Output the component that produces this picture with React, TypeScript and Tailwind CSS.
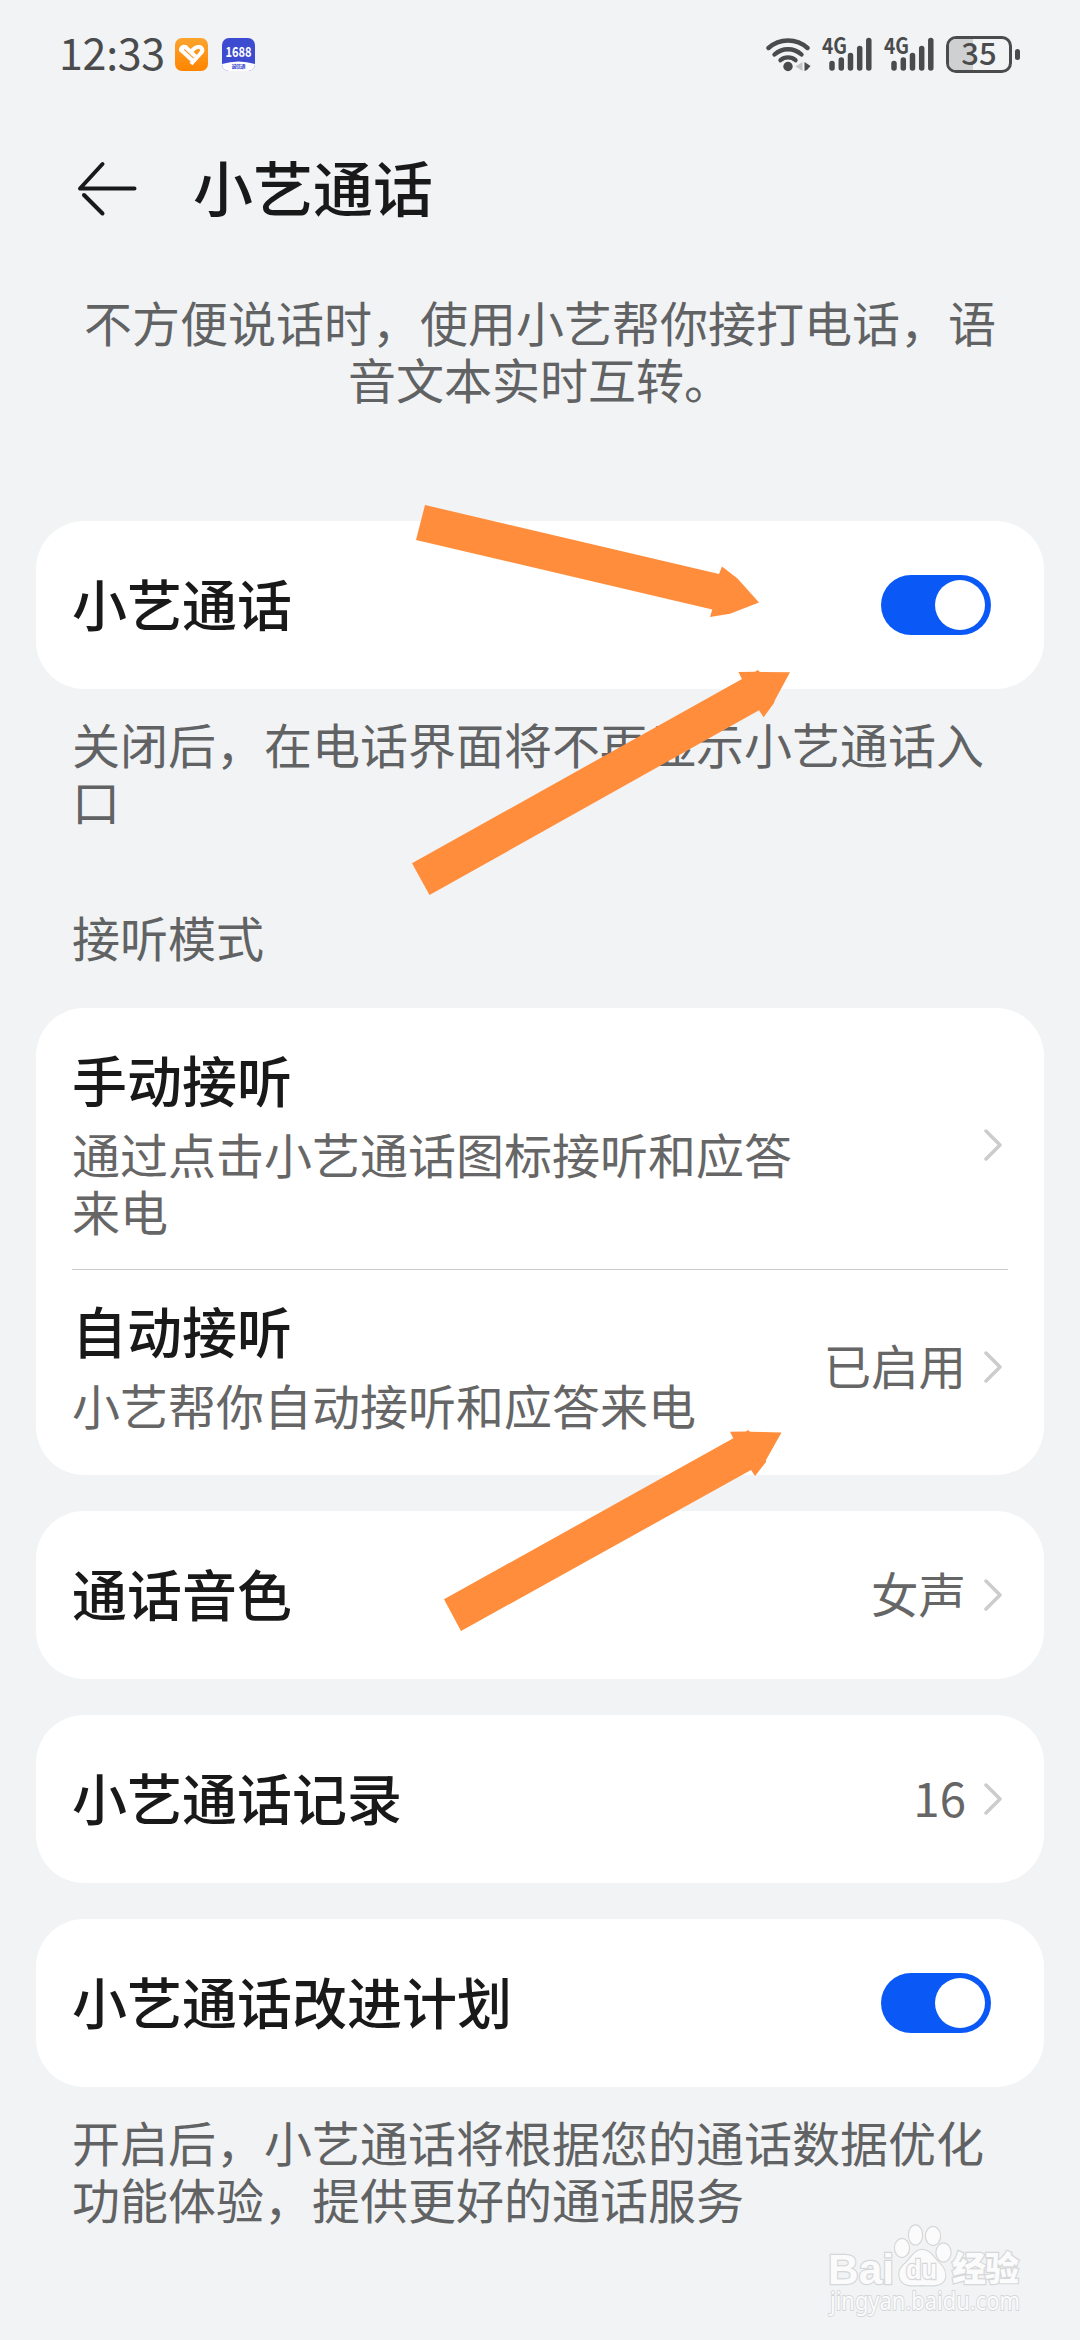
import { ReactNode, useState } from 'react';

const ARROWS = [
  '425,505 719,574 722,566.5 737.5,578.5 759,602.5 730,613.7 710,617 712.3,609.5 416,540',
  '412,863.3 742,679 738.4,672 755,671.7 757.7,670 760,672 790,672.3 775,700 774,703 763.6,717.3 759,710.3 429.5,895',
  '444,1599.3 733.3,1438.3 730,1431.7 746,1431.5 748.2,1430 750,1431.7 781.5,1432.5 766,1460 766,1462 755,1476 751,1470 461,1631',
];

function Signal() {
  return (
    <svg width="50" height="36" viewBox="0 0 50 36" className="shrink-0 overflow-visible">
      <text x="0" y="18" fontSize="22" fontWeight="600" fill="#4a4b4c" textLength="25" lengthAdjust="spacingAndGlyphs">4G</text>
      <path d="M10 27.500v4.500M19.300 24v8M28.500 19.500v12.500M37.700 12.500v19.500M46.800 4.500v27.500" stroke="#4a4b4c" strokeWidth="5.500" strokeLinecap="round" />
    </svg>
  );
}

function Wifi() {
  return (
    <svg width="46" height="36" viewBox="0 0 46 36" className="shrink-0">
      <g fill="none" stroke="#4a4b4c" strokeWidth="4.400" strokeLinecap="round">
        <path d="M2.500 12A29 29 0 0 1 41.500 12" />
        <path d="M8.500 18.500A20 20 0 0 1 35.500 18.500" />
        <path d="M14.500 24.200A11.500 11.500 0 0 1 29.500 24.200" />
      </g>
      <circle cx="22" cy="30.500" r="4.700" fill="#4a4b4c" />
      <path d="M36.500 26v9l-7-4.500z" fill="#c4c5c6" />
      <path d="M38.500 26l6 4-3.500 4-2.500 1z" fill="#4a4b4c" />
    </svg>
  );
}

function StatusBar() {
  return (
    <div className="flex h-[108px] items-center pr-[60px] pl-[59px] text-[#4a4b4c]">
      <span className="w-[116px] pb-[7px] text-[43px] leading-[50px] tracking-[-0.3px]">12:33</span>
      <svg width="33" height="33" viewBox="0 0 33 33">
        <defs>
          <linearGradient id="orange" x1="0" y1="0" x2="0" y2="1">
            <stop offset="0" stopColor="#fba42e" />
            <stop offset="1" stopColor="#ff8500" />
          </linearGradient>
        </defs>
        <rect width="33" height="33" rx="7" fill="url(#orange)" />
        <g fill="none" stroke="#fff" strokeWidth="4" strokeLinejoin="round">
          <path d="M14.500 14.500L20 10C25.500 6.500 29.500 11.500 25.500 15.500L16 26" />
          <path d="M10 8.500L20.500 18.500" />
          <path d="M6 12L17.500 22.500" />
        </g>
        <path d="M4 13C3.500 8 8 5.500 12 7.500L7 14.500z" fill="#fff" />
      </svg>
      <svg width="33" height="33" viewBox="0 0 33 33" className="ml-[14px] overflow-visible">
        <clipPath id="shop">
          <rect width="33" height="33" rx="7" />
        </clipPath>
        <g clipPath="url(#shop)">
          <rect width="33" height="33" fill="#3d4bd0" />
          <path d="M0 26Q16.500 21 33 26V33H0z" fill="#fff" />
        </g>
        <text x="3.500" y="18.500" fontSize="14" fontWeight="700" fill="#fff" textLength="26" lengthAdjust="spacingAndGlyphs">1688</text>
        <text x="9.500" y="30" fontSize="5" fontWeight="700" fill="#3d4bd0" textLength="14">诚信通</text>
      </svg>
      <div className="ml-auto flex items-center">
        <Wifi />
        <div className="ml-[10px] flex gap-3">
          <Signal />
          <Signal />
        </div>
        <div className="relative ml-[12px] flex h-[37px] w-[66px] items-center justify-center rounded-[10px] border-3 border-[#4a4b4c]">
          <div className="absolute inset-y-0 left-0 w-6 rounded-l-[7px] bg-[#cfd0d1]" />
          <span className="relative pb-[4px] text-[31px] leading-[32px] font-medium">35</span>
        </div>
        <div className="ml-[3px] h-[11px] w-[5px] rounded-full bg-[#4a4b4c]" />
      </div>
    </div>
  );
}

function Chevron() {
  return (
    <svg width="20" height="36" viewBox="0 0 20 36" className="ml-[18px] shrink-0">
      <path d="M2 4L16 18L2 32" fill="none" stroke="#ccc" strokeWidth="3.500" strokeLinecap="round" strokeLinejoin="round" />
    </svg>
  );
}

function Toggle({ defaultOn = true }: { defaultOn?: boolean }) {
  const [on, setOn] = useState(defaultOn);
  return (
    <button
      onClick={() => setOn(!on)}
      className={`mr-[53px] flex h-[60px] w-[110px] items-center rounded-full px-[6px] ${on ? 'justify-end bg-[#0a59f7]' : 'justify-start bg-gray-300'}`}
    >
      <span className="size-[50px] rounded-full bg-white" />
    </button>
  );
}

function Card({ title, children }: { title: string; children: ReactNode }) {
  return (
    <div className="mx-9 flex h-[168px] items-center rounded-[48px] bg-white pl-9">
      <span className="flex-1 pb-[6px] text-[55px] leading-[64px] font-medium">{title}</span>
      {children}
    </div>
  );
}

function Value({ text }: { text?: string }) {
  return (
    <div className="flex items-center pr-10">
      <span className="pb-[4px] text-[47.5px] leading-[56px] text-[#666]">{text}</span>
      <Chevron />
    </div>
  );
}

function Watermark() {
  return (
    <svg width="200" height="100" viewBox="0 0 200 100" className="absolute top-[2220px] left-[825px] overflow-visible">
      <g fill="#fbfbfc" stroke="#d6d7d8" strokeWidth="2.400" paintOrder="stroke">
        <text x="3" y="63.500" fontSize="42" fontWeight="700" textLength="66" lengthAdjust="spacingAndGlyphs" fontFamily="Liberation Sans">Bai</text>
        <ellipse cx="77" cy="28" rx="7" ry="9" />
        <ellipse cx="90.500" cy="15" rx="6.500" ry="9.500" />
        <ellipse cx="108" cy="16" rx="7" ry="9" />
        <ellipse cx="118.500" cy="32.500" rx="7" ry="9" />
        <path d="M97 30c-7 0-10 7-16 13-5 4-8 9-6 15 2 7 9 8 22 7 14 1 21 0 23-7 1-6-1-10-6-15-6-6-9-13-17-13z" />
        <text x="81" y="59" fontSize="27" fontWeight="700" textLength="31" lengthAdjust="spacingAndGlyphs" fontFamily="Liberation Sans">du</text>
        <text x="127" y="61" fontSize="34" fontWeight="900" textLength="67">经验</text>
        <text x="5" y="90" fontSize="25" strokeWidth="1.800" textLength="190" lengthAdjust="spacingAndGlyphs" fontFamily="Noto Sans">jingyan.baidu.com</text>
      </g>
    </svg>
  );
}

export default function App() {
  return (
    <div className="relative h-[2340px] w-[1080px] overflow-hidden bg-[#f1f3f5] font-['Noto_Sans_CJK_SC',sans-serif] text-[#191919]">
      <StatusBar />

      <div className="flex h-[162px] items-center pl-[76px]">
        <svg width="62" height="60" viewBox="0 0 62 60" fill="none" stroke="#191919" strokeWidth="4" strokeLinecap="round" strokeLinejoin="round">
          <path d="M26.500 5L4 29.500H58.500" />
          <path d="M8 36L26.500 54.500" />
        </svg>
        <h1 className="ml-[55px] pb-[7px] text-[60px] leading-[72px] font-medium">小艺通话</h1>
      </div>

      <p className="mt-[23px] text-center text-[48px] leading-[57px] text-[#616263]">
        不方便说话时，使用小艺帮你接打电话，语
        <br />
        音文本实时互转。
      </p>

      <div className="mt-[114px]">
        <Card title="小艺通话"><Toggle /></Card>
      </div>
      <p className="mt-[26px] pl-[72px] text-[48px] leading-[57px] text-[#616263]">
        关闭后，在电话界面将不再显示小艺通话入
        <br />口
      </p>
      <h2 className="mt-[79px] h-[100px] pl-[72px] text-[48px] leading-[57px] text-[#616263]">接听模式</h2>

      <div className="mx-9 h-[467px] rounded-[48px] bg-white px-9">
        <div className="flex h-[262px] items-center border-b border-[#ccc]">
          <div className="flex-1 pt-[7px]">
            <div className="text-[55px] leading-[64px] font-medium">手动接听</div>
            <div className="mt-[15px] text-[48px] leading-[57px] text-[#666]">
              通过点击小艺通话图标接听和应答
              <br />
              来电
            </div>
          </div>
          <div className="-mr-9 pt-3"><Value /></div>
        </div>
        <div className="flex h-[193px] items-center">
          <div className="flex-1 pb-[3px]">
            <div className="text-[55px] leading-[64px] font-medium">自动接听</div>
            <div className="mt-[15px] text-[48px] leading-[57px] text-[#666]">小艺帮你自动接听和应答来电</div>
          </div>
          <div className="-mr-9"><Value text="已启用" /></div>
        </div>
      </div>

      <div className="mt-9 space-y-9">
        <Card title="通话音色"><Value text="女声" /></Card>
        <Card title="小艺通话记录"><Value text="16" /></Card>
        <Card title="小艺通话改进计划"><Toggle /></Card>
      </div>
      <p className="mt-[26px] pl-[72px] text-[48px] leading-[57px] text-[#616263]">
        开启后，小艺通话将根据您的通话数据优化
        <br />
        功能体验，提供更好的通话服务
      </p>

      <svg width="1080" height="2340" viewBox="0 0 1080 2340" className="pointer-events-none absolute inset-0" fill="#ff8d3b">
        {ARROWS.map((points) => (
          <polygon key={points} points={points} />
        ))}
      </svg>
      <Watermark />
    </div>
  );
}
